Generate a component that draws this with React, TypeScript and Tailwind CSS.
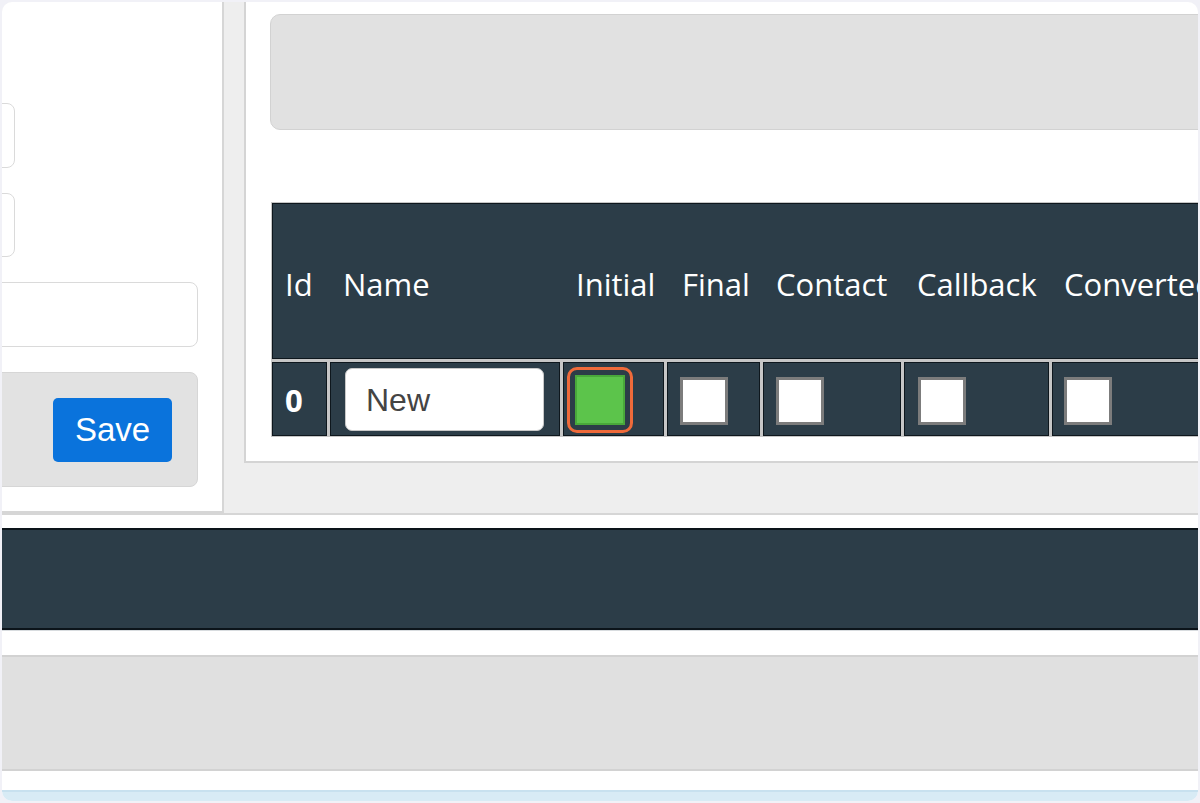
import React from "react";

const headerCols = [
  { label: "Id", w: "w-[58px]", pl: "pl-[12px]" },
  { label: "Name", w: "w-[233px]", pl: "pl-[12px]" },
  { label: "Initial", w: "w-[104px]", pl: "pl-[12px]" },
  { label: "Final", w: "w-[96px]", pl: "pl-[14px]" },
  { label: "Contact", w: "w-[141px]", pl: "pl-[12px]" },
  { label: "Callback", w: "w-[148px]", pl: "pl-[12px]" },
  { label: "Converted", w: "w-[200px]", pl: "pl-[11px]" },
];

function Box() {
  return <div className="w-[48px] h-[48px] bg-white border-[3px] border-[#7c7c7c] shrink-0" />;
}

function Cell({ w, children, className = "" }: { w: string; children?: React.ReactNode; className?: string }) {
  return (
    <div className={`${w} shrink-0 h-full border border-[#0e171d] bg-[#2c3d48] flex items-center ${className}`}>
      {children}
    </div>
  );
}

export default function App() {
  return (
    <div className="w-[1200px] h-[803px] bg-[#f1f1f7] p-[2px] overflow-hidden">
      <div className="w-full h-full rounded-[10px] overflow-hidden bg-white flex flex-col">
        {/* top section */}
        <div className="h-[513px] shrink-0 flex bg-[#eeeeee] border-b-2 border-[#d6d6d6]">
          {/* left panel */}
          <div className="w-[222px] h-full shrink-0 bg-white border-r-2 border-b-2 border-[#d6d6d6] overflow-hidden flex flex-col pt-[101px]">
            <div className="w-[200px] ml-[-187px] h-[65px] shrink-0 rounded-[8px] border-[1.5px] border-[#dadada] bg-white" />
            <div className="w-[200px] ml-[-187px] mt-[25px] h-[64px] shrink-0 rounded-[8px] border-[1.5px] border-[#dadada] bg-white" />
            <div className="w-[300px] ml-[-104px] mt-[25px] h-[65px] shrink-0 rounded-[8px] border-[1.5px] border-[#dadada] bg-white" />
            <div className="w-[300px] ml-[-104px] mt-[25px] h-[115px] shrink-0 rounded-[8px] border border-[#d6d6d6] bg-[#e2e2e2] flex items-center justify-end pr-[25px]">
              <div
                className="w-[119px] h-[64px] rounded-[5px] bg-[#0a73dc] text-white text-[33px] flex items-center justify-center"
                style={{ fontFamily: '"Liberation Sans", Arial, sans-serif' }}
              >
                Save
              </div>
            </div>
          </div>
          {/* gap */}
          <div className="w-[20px] shrink-0" />
          {/* main panel */}
          <div className="flex-1 h-[461px] bg-white border-l-2 border-b-2 border-[#d4d4d4] overflow-hidden flex flex-col pt-[12px]">
            <div className="ml-[24px] w-[1000px] h-[116px] shrink-0 rounded-[10px] border border-[#d2d2d2] bg-[#e1e1e1]" />
            <div
              className="ml-[25px] mt-[72px] w-[1100px] shrink-0 bg-[#c6c6c6] p-[1px] flex flex-col gap-[3px]"
              style={{ fontFamily: '"Open Sans", "Noto Sans", sans-serif' }}
            >
              {/* header */}
              <div className="h-[156px] border border-[#0e171d] bg-[#2c3d48] flex items-center pt-[6px]">
                {headerCols.map((c) => (
                  <div key={c.label} className={`${c.w} ${c.pl} shrink-0 text-white text-[31px] leading-none whitespace-nowrap`}>
                    {c.label}
                  </div>
                ))}
              </div>
              {/* body row */}
              <div className="h-[74px] flex gap-[3px]">
                <Cell w="w-[55px]" className="pl-[12px] pt-[3px]">
                  <span className="text-white text-[31px] font-bold leading-none">0</span>
                </Cell>
                <Cell w="w-[230px]" className="pl-[14px] pt-[1px]">
                  <div
                    className="w-[199px] h-[63px] rounded-[7px] bg-white border border-[#c8c8c8] flex items-center pl-[20px] text-[32px] text-[#444444]"
                    style={{ fontFamily: '"Liberation Sans", Arial, sans-serif' }}
                  >
                    New
                  </div>
                </Cell>
                <Cell w="w-[101px]" className="pl-[3px] pt-[2px]">
                  <div className="p-[5px] border-[3px] border-[#ef6a3a] rounded-[10px]">
                    <div className="w-[50px] h-[50px] bg-[#5cc44b] border-2 border-[#49a83a]" />
                  </div>
                </Cell>
                <Cell w="w-[93px]" className="pl-[12px] pt-[4px]">
                  <Box />
                </Cell>
                <Cell w="w-[138px]" className="pl-[12px] pt-[4px]">
                  <Box />
                </Cell>
                <Cell w="w-[145px]" className="pl-[13px] pt-[4px]">
                  <Box />
                </Cell>
                <Cell w="w-[200px]" className="pl-[11px] pt-[4px]">
                  <Box />
                </Cell>
              </div>
            </div>
          </div>
        </div>
        {/* lower sections */}
        <div className="h-[13px] shrink-0 bg-white" />
        <div className="h-[102px] shrink-0 bg-[#2c3d48] border-y-2 border-[#0c141a]" />
        <div className="h-[25px] shrink-0 bg-white border-t border-[#d8dcdf]" />
        <div className="h-[116px] shrink-0 bg-[#e0e0e0] border-y-2 border-[#d2d2d2]" />
        <div className="h-[19px] shrink-0 bg-white" />
        <div className="flex-1 bg-[#d8ebf5] border-t-2 border-[#c8e1ef]" />
      </div>
    </div>
  );
}
